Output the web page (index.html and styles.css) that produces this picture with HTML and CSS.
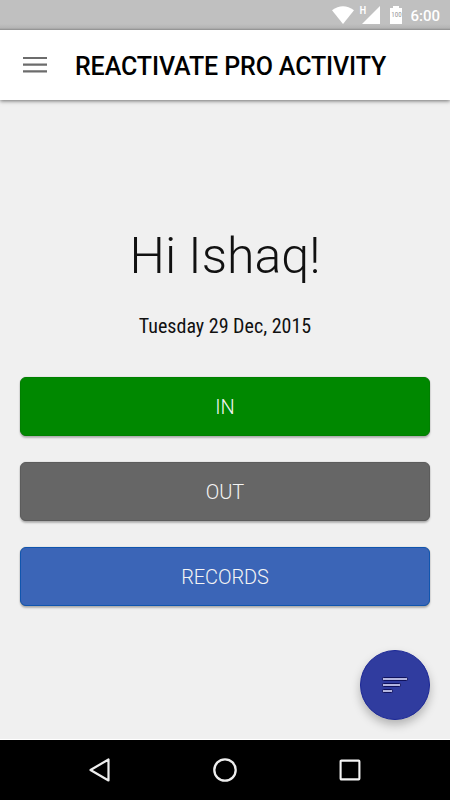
FILE: index.html
```
<!DOCTYPE html>
<html lang="en">
<head>
    <meta charset="UTF-8">
    <meta name="viewport" content="width=device-width, initial-scale=1.0">
    <title>Reactivate Pro Activity</title>
    <link rel="stylesheet" href="styles.css">
</head>
<body>
    <div class="status-bar">
        <svg class="wifi" width="24" height="20" viewBox="0 0 24 20">
            <path d="M1 5.3 Q12 -2.8 23 5.3 L12 19 Z" fill="#fff"/>
        </svg>
        <span class="network">H</span>
        <svg class="signal" width="18" height="18" viewBox="0 0 18 18">
            <path d="M18 0V18H0Z" fill="#fff"/>
        </svg>
        <div class="battery"><span>100</span></div>
        <span class="clock">6:00</span>
    </div>

    <header class="toolbar">
        <svg class="menu-icon" width="24" height="18" viewBox="0 0 24 18">
            <path d="M0 2H24M0 8.7H24M0 15.4H24" stroke="#6c6c6c" stroke-width="2.2"/>
        </svg>
        <h1>REACTIVATE PRO ACTIVITY</h1>
    </header>

    <main>
        <h2>Hi Ishaq!</h2>
        <p class="date">Tuesday 29 Dec, 2015</p>
        <button class="btn in">IN</button>
        <button class="btn out">OUT</button>
        <button class="btn records">RECORDS</button>
        <button class="fab" aria-label="Sort">
            <svg width="28" height="20" viewBox="0 0 28 20">
                <g fill="#b3b5df" stroke="#10125c" stroke-width="1">
                    <rect x="1.5" y="2.5" width="25" height="3" rx=".8"/>
                    <rect x="1.5" y="8.5" width="18" height="3" rx=".8"/>
                    <rect x="1.5" y="14.5" width="10" height="3" rx=".8"/>
                </g>
            </svg>
        </button>
    </main>

    <nav class="nav-bar">
        <svg width="24" height="26" viewBox="0 0 24 26">
            <path d="M20.5 2.5V23.5L2.5 13Z" fill="none" stroke="#eee" stroke-width="2.2" stroke-linejoin="round"/>
        </svg>
        <svg width="24" height="26" viewBox="0 0 24 26">
            <circle cx="12" cy="13" r="10.7" fill="none" stroke="#eee" stroke-width="2.3"/>
        </svg>
        <svg width="24" height="26" viewBox="0 0 24 26">
            <rect x="2.6" y="3.6" width="18.8" height="18.8" rx=".8" fill="none" stroke="#f4f4f4" stroke-width="2.1"/>
        </svg>
    </nav>
</body>
</html>
```
FILE: styles.css
```
* {
    box-sizing: border-box;
}
body {
    margin: 0;
    height: 800px;
    display: flex;
    flex-direction: column;
    background-color: #f0f0f0;
    font-family: Roboto, sans-serif;
    overflow: hidden;
}
svg {
    display: block;
    flex: none;
    overflow: visible;
}
.status-bar {
    height: 30px;
    display: flex;
    align-items: flex-start;
    justify-content: flex-end;
    padding-right: 10px;
    background: linear-gradient(#c0c0c0 24px, #b4b4b4 28px, #8c8c8c 30px);
    color: #fff;
}
.wifi {
    margin-top: 5px;
}
.network {
    width: 6px;
    margin: 5px 0 0 4px;
    font-family: "Roboto Condensed", Roboto, sans-serif;
    font-size: 11px;
    line-height: 11px;
    font-weight: 500;
    font-stretch: 75%;
}
.signal {
    margin: 6px 0 0 -3px;
}
.battery {
    width: 12px;
    height: 18px;
    margin: 6px 0 0 10px;
    padding-top: 4px;
    display: flex;
    justify-content: center;
    background: linear-gradient(#fff, #fff) center top / 6px 2px no-repeat,
        linear-gradient(#fff, #fff) 0 2px / 12px 16px no-repeat;
    color: #999;
    font-family: "Roboto Condensed", Roboto, sans-serif;
    font-size: 7px;
    line-height: 10px;
    font-stretch: 75%;
}
.clock {
    margin: 6px 0 0 8px;
    font-size: 15px;
    line-height: 21px;
    font-weight: 500;
}
.toolbar {
    height: 70px;
    display: flex;
    align-items: center;
    padding: 0 23px;
    background-color: #fff;
    box-shadow: 0 1px 4px rgba(0, 0, 0, 0.55);
    clip-path: inset(0 0 -10px 0);
}
.toolbar h1 {
    margin: 3px 0 0 28px;
    font-size: 25px;
    line-height: 31px;
    font-weight: 500;
    letter-spacing: -0.11px;
    white-space: nowrap;
}
main {
    flex: 1;
    display: flex;
    flex-direction: column;
    align-items: center;
    padding: 126px 20px 0;
}
h2 {
    margin: 0;
    font-size: 50px;
    line-height: 60px;
    font-weight: 300;
    color: #111;
}
.date {
    margin: 28px 0 39px;
    font-family: "Roboto Condensed", Roboto, sans-serif;
    font-size: 20px;
    line-height: 24px;
    font-stretch: 75%;
    color: #111;
}
.btn {
    width: 410px;
    height: 59px;
    flex: none;
    margin: 0 0 26px;
    padding: 1px 0 0;
    border: 1px solid;
    border-radius: 6px;
    box-shadow: 0 2px 2px rgba(0, 0, 0, 0.25), 0 0 1px rgba(0, 0, 0, 0.4);
    color: #f4f4f4;
    font-family: inherit;
    font-size: 20px;
    font-weight: 300;
    letter-spacing: -0.1px;
}
.in {
    background-color: #008800;
    border-color: #008000;
}
.out {
    background-color: #666;
    border-color: #5c5c5c;
}
.records {
    background-color: #3b65b7;
    border-color: #1055ae;
}
.fab {
    width: 70px;
    height: 70px;
    display: flex;
    align-items: center;
    justify-content: center;
    align-self: flex-end;
    margin-top: 18px;
    padding: 0;
    border: 1px solid #1b2796;
    border-radius: 50%;
    background-color: #303c9f;
    box-shadow: 0 5px 10px rgba(0, 0, 0, 0.25);
}
.nav-bar {
    height: 60px;
    display: flex;
    align-items: center;
    justify-content: center;
    gap: 101px;
    background-color: #000;
    box-shadow: 0 -1px #fff;
}
```
